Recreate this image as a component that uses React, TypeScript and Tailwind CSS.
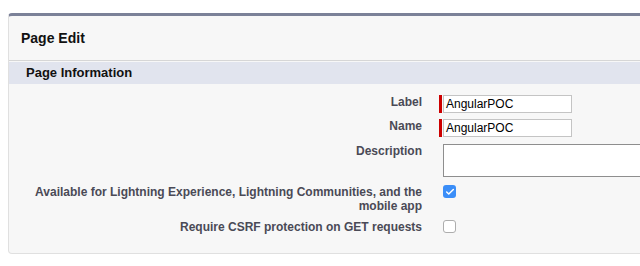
import { Check } from 'lucide-react'

type Row = {
  label: string
  kind: 'input' | 'textarea' | 'checkbox'
  value?: string
  required?: boolean
  checked?: boolean
}

const rows: Row[] = [
  { label: 'Label', kind: 'input', value: 'AngularPOC', required: true },
  { label: 'Name', kind: 'input', value: 'AngularPOC', required: true },
  { label: 'Description', kind: 'textarea' },
  {
    label: 'Available for Lightning Experience, Lightning Communities, and the mobile app',
    kind: 'checkbox',
    checked: true,
  },
  { label: 'Require CSRF protection on GET requests', kind: 'checkbox', checked: false },
]

function Field({ row }: { row: Row }) {
  if (row.kind === 'input') {
    return (
      <div className="flex h-[18px] items-stretch">
        <span className="w-[3px] bg-[#c00]" />
        <span className="ml-px flex w-[129px] items-center border border-[#c4c4c4] bg-white pl-[2px] text-[12px] text-black">
          {row.value}
        </span>
      </div>
    )
  }

  if (row.kind === 'textarea') {
    return <div className="ml-[4px] h-[33px] w-[260px] shrink-0 border border-[#8e8e8e] bg-white" />
  }

  return (
    <div className="ml-[4px] flex pt-px">
      {row.checked ? (
        <span className="flex h-[13px] w-[13px] items-center justify-center rounded-[3px] bg-[#3b8ef8]">
          <Check className="h-[10px] w-[10px] text-white" strokeWidth={3.5} />
        </span>
      ) : (
        <span className="h-[13px] w-[13px] rounded-[3px] border border-[#adadad] bg-white" />
      )}
    </div>
  )
}

export default function App() {
  return (
    <div className="h-[266px] w-[640px] overflow-hidden bg-white font-['Liberation_Sans',Arial,sans-serif]">
      <div className="ml-2 mt-[13px] w-[660px] rounded-[4px] border border-t-[3px] border-[#e0e0e0] border-t-[#7b8198] bg-[#f7f7f7]">
        <div className="flex h-[44px] items-center pl-3">
          <h1 className="text-[14px] font-bold text-[#111]">Page Edit</h1>
        </div>

        <div className="border-t border-[#d6d6d6] pt-px">
          <div className="flex h-[22px] items-center bg-[#e1e4ee] pl-[17px]">
            <h2 className="text-[13px] font-bold text-[#111]">Page Information</h2>
          </div>
        </div>

        <div className="flex flex-col gap-[7px] pb-[19px] pt-[11px]">
          {rows.map((row, i) => (
            <div key={i} className={`flex ${i === 1 ? '-mt-px' : ''} ${i === 4 ? '-mt-px' : ''}`}>
              <div
                className={`w-[430px] shrink-0 pl-4 pr-[17px] text-right text-[12px] font-bold leading-[14px] text-[#4a4a56] ${
                  row.kind === 'checkbox' ? 'pt-[1px]' : 'pt-0'
                }`}
              >
                {row.label}
              </div>
              <Field row={row} />
            </div>
          ))}
        </div>
      </div>

      <div className="ml-4 mt-[13px] h-px w-[122px] bg-[#ececec]" />
    </div>
  )
}
